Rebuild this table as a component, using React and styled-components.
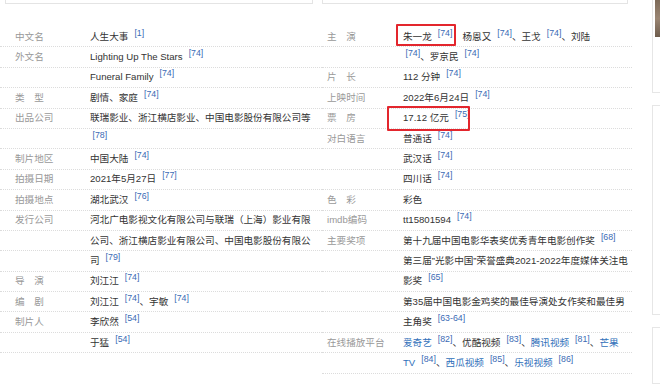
import React from "react";
import styled, { createGlobalStyle } from "styled-components";

const GlobalStyle = createGlobalStyle`
  html, body {
    margin: 0;
    padding: 0;
    background: #fff;
    overflow: hidden;
  }
  body {
    font-family: "Liberation Sans", "Noto Sans CJK SC", sans-serif;
  }
`;

const Page = styled.div`
  display: flex;
  width: 660px;
  height: 384px;
  overflow: hidden;
  background: #fff;
`;

const Main = styled.div`
  flex: 0 0 632px;
  display: flex;
  flex-direction: column;
`;

// 위쪽에 잘린 두 박스
const TopBar = styled.div`
  display: flex;
  height: 4px;
  margin-bottom: 23px;
`;

const TopBox = styled.div`
  box-sizing: border-box;
  height: 4px;
  width: ${(p) => p.$width}px;
  margin-left: ${(p) => p.$left}px;
  border: 1px solid #e4e4e4;
  border-top: none;
`;

const InfoGrid = styled.div`
  display: flex;
`;

const Column = styled.div`
  flex: 0 0 ${(p) => p.$width}px;
  display: flex;
  flex-direction: column;
`;

const Line = styled.div`
  display: flex;
  align-items: center;
  box-sizing: border-box;
  height: 20.4px;
  border-bottom: 1px dotted #dcdcdc;
  font-size: 9.6px;
  line-height: 16px;
  white-space: nowrap;
`;

const Label = styled.div`
  flex: 0 0 ${(p) => p.$width}px;
  box-sizing: border-box;
  padding-left: ${(p) => p.$indent}px;
  color: #999;
`;

const Value = styled.div`
  flex: 1;
  color: #333;
`;

const Ref = styled.span`
  color: #3b6bb5;
  font-size: 8.8px;
  line-height: 0;
  vertical-align: 4px;
  margin-left: ${(p) => (p.$flush ? 0 : 6)}px;
`;

const Link = styled.span`
  color: #2f6fba;
`;

// 빨간 표시 박스
const Marked = styled.span`
  position: relative;
  display: inline-block;
  line-height: 16px;
  margin-right: ${(p) => p.$gap || 0}px;
  &::after {
    content: "";
    position: absolute;
    top: ${(p) => p.$box[0]}px;
    right: ${(p) => p.$box[1]}px;
    bottom: ${(p) => p.$box[2]}px;
    left: ${(p) => p.$box[3]}px;
    border: 2px solid #e3262d;
    border-radius: 1px;
  }
`;

const Sidebar = styled.div`
  flex: 0 0 200px;
  margin-left: 20px;
  display: flex;
  flex-direction: column;
  gap: 12px;
`;

const Card = styled.div`
  box-sizing: border-box;
  height: ${(p) => p.$height}px;
  border: 1px solid #e6e6e6;
  border-top: ${(p) => (p.$cut ? "none" : "1px solid #e6e6e6")};
  padding: 0 2px;
`;

const Photo = styled.div`
  height: 37px;
  background: linear-gradient(180deg, #7d6a58 0%, #9a8572 50%, #6e5c4c 100%);
`;

const left = [
  { label: "中文名", lines: [<>人生大事<Ref>[1]</Ref></>] },
  { label: "外文名", lines: [<>Lighting Up The Stars<Ref>[74]</Ref></>] },
  { label: "", lines: [<>Funeral Family<Ref>[74]</Ref></>] },
  { label: "类\u3000型", lines: [<>剧情、家庭<Ref>[74]</Ref></>] },
  {
    label: "出品公司",
    lines: [
      <>联瑞影业、浙江横店影业、中国电影股份有限公司等</>,
      <>
        <Ref $flush>&nbsp;[78]</Ref>
      </>,
    ],
  },
  { label: "制片地区", lines: [<>中国大陆<Ref>[74]</Ref></>] },
  { label: "拍摄日期", lines: [<>2021年5月27日<Ref>[77]</Ref></>] },
  { label: "拍摄地点", lines: [<>湖北武汉<Ref>[76]</Ref></>] },
  {
    label: "发行公司",
    lines: [
      <>河北广电影视文化有限公司与联瑞（上海）影业有限</>,
      <>公司、浙江横店影业有限公司、中国电影股份有限公</>,
      <>司<Ref>[79]</Ref></>,
    ],
  },
  { label: "导\u3000演", lines: [<>刘江江<Ref>[74]</Ref></>] },
  { label: "编\u3000剧", lines: [<>刘江江<Ref>[74]</Ref>、宇敏<Ref>[74]</Ref></>] },
  { label: "制片人", lines: [<>李欣然<Ref>[54]</Ref></>] },
  { label: "", lines: [<>于猛<Ref>[54]</Ref></>] },
];

const right = [
  {
    label: "主\u3000演",
    lines: [
      <>
        <Marked $box={[-5, -4, -1, -7]} $gap={10}>
          朱一龙<Ref>[74]</Ref>
        </Marked>
        杨恩又<Ref>[74]</Ref>、王戈<Ref>[74]</Ref>、刘陆
      </>,
      <>
        <Ref $flush>&nbsp;[74]</Ref>、罗京民<Ref>[74]</Ref>
      </>,
    ],
  },
  { label: "片\u3000长", lines: [<>112 分钟<Ref>[74]</Ref></>] },
  { label: "上映时间", lines: [<>2022年6月24日<Ref>[74]</Ref></>] },
  {
    label: "票\u3000房",
    lines: [
      <Marked $box={[-4, 0, -5, -16]}>
        17.12 亿元<Ref>[75]</Ref>
      </Marked>,
    ],
  },
  {
    label: "对白语言",
    lines: [
      <>普通话<Ref>[74]</Ref></>,
      <>武汉话<Ref>[74]</Ref></>,
      <>四川话<Ref>[74]</Ref></>,
    ],
  },
  { label: "色\u3000彩", lines: [<>彩色</>] },
  { label: "imdb编码", lines: [<>tt15801594<Ref>[74]</Ref></>] },
  {
    label: "主要奖项",
    lines: [<>第十九届中国电影华表奖优秀青年电影创作奖<Ref>[68]</Ref></>],
  },
  {
    label: "",
    lines: [
      <>第三届”光影中国”荣誉盛典2021-2022年度媒体关注电</>,
      <>影奖<Ref>[65]</Ref></>,
    ],
  },
  {
    label: "",
    lines: [
      <>第35届中国电影金鸡奖的最佳导演处女作奖和最佳男</>,
      <>主角奖<Ref>[63-64]</Ref></>,
    ],
  },
  {
    label: "在线播放平台",
    lines: [
      <>
        <Link>爱奇艺</Link>
        <Ref>[82]</Ref>、优酷视频<Ref>[83]</Ref>、<Link>腾讯视频</Link>
        <Ref>[81]</Ref>、<Link>芒果</Link>
      </>,
      <>
        <Link>TV</Link>
        <Ref>[84]</Ref>、<Link>西瓜视频</Link>
        <Ref>[85]</Ref>、<Link>乐视视频</Link>
        <Ref>[86]</Ref>
      </>,
    ],
  },
];

const InfoColumn = ({ rows, width, labelWidth, indent }) => (
  <Column $width={width}>
    {rows.map((row, i) =>
      row.lines.map((line, j) => (
        <Line key={`${i}-${j}`}>
          <Label $width={labelWidth} $indent={indent}>
            {j === 0 ? row.label : ""}
          </Label>
          <Value>{line}</Value>
        </Line>
      ))
    )}
  </Column>
);

const App = () => {
  return (
    <Page>
      <GlobalStyle />
      <Main>
        <TopBar>
          <TopBox $left={5} $width={308} />
          <TopBox $left={9} $width={306} />
        </TopBar>
        <InfoGrid>
          <InfoColumn rows={left} width={322} labelWidth={90} indent={15} />
          <InfoColumn rows={right} width={310} labelWidth={81} indent={5} />
        </InfoGrid>
      </Main>
      <Sidebar>
        <Card $height={98} $cut>
          <Photo />
        </Card>
        <Card $height={220} />
        <Card $height={60} />
      </Sidebar>
    </Page>
  );
};

export default App;
